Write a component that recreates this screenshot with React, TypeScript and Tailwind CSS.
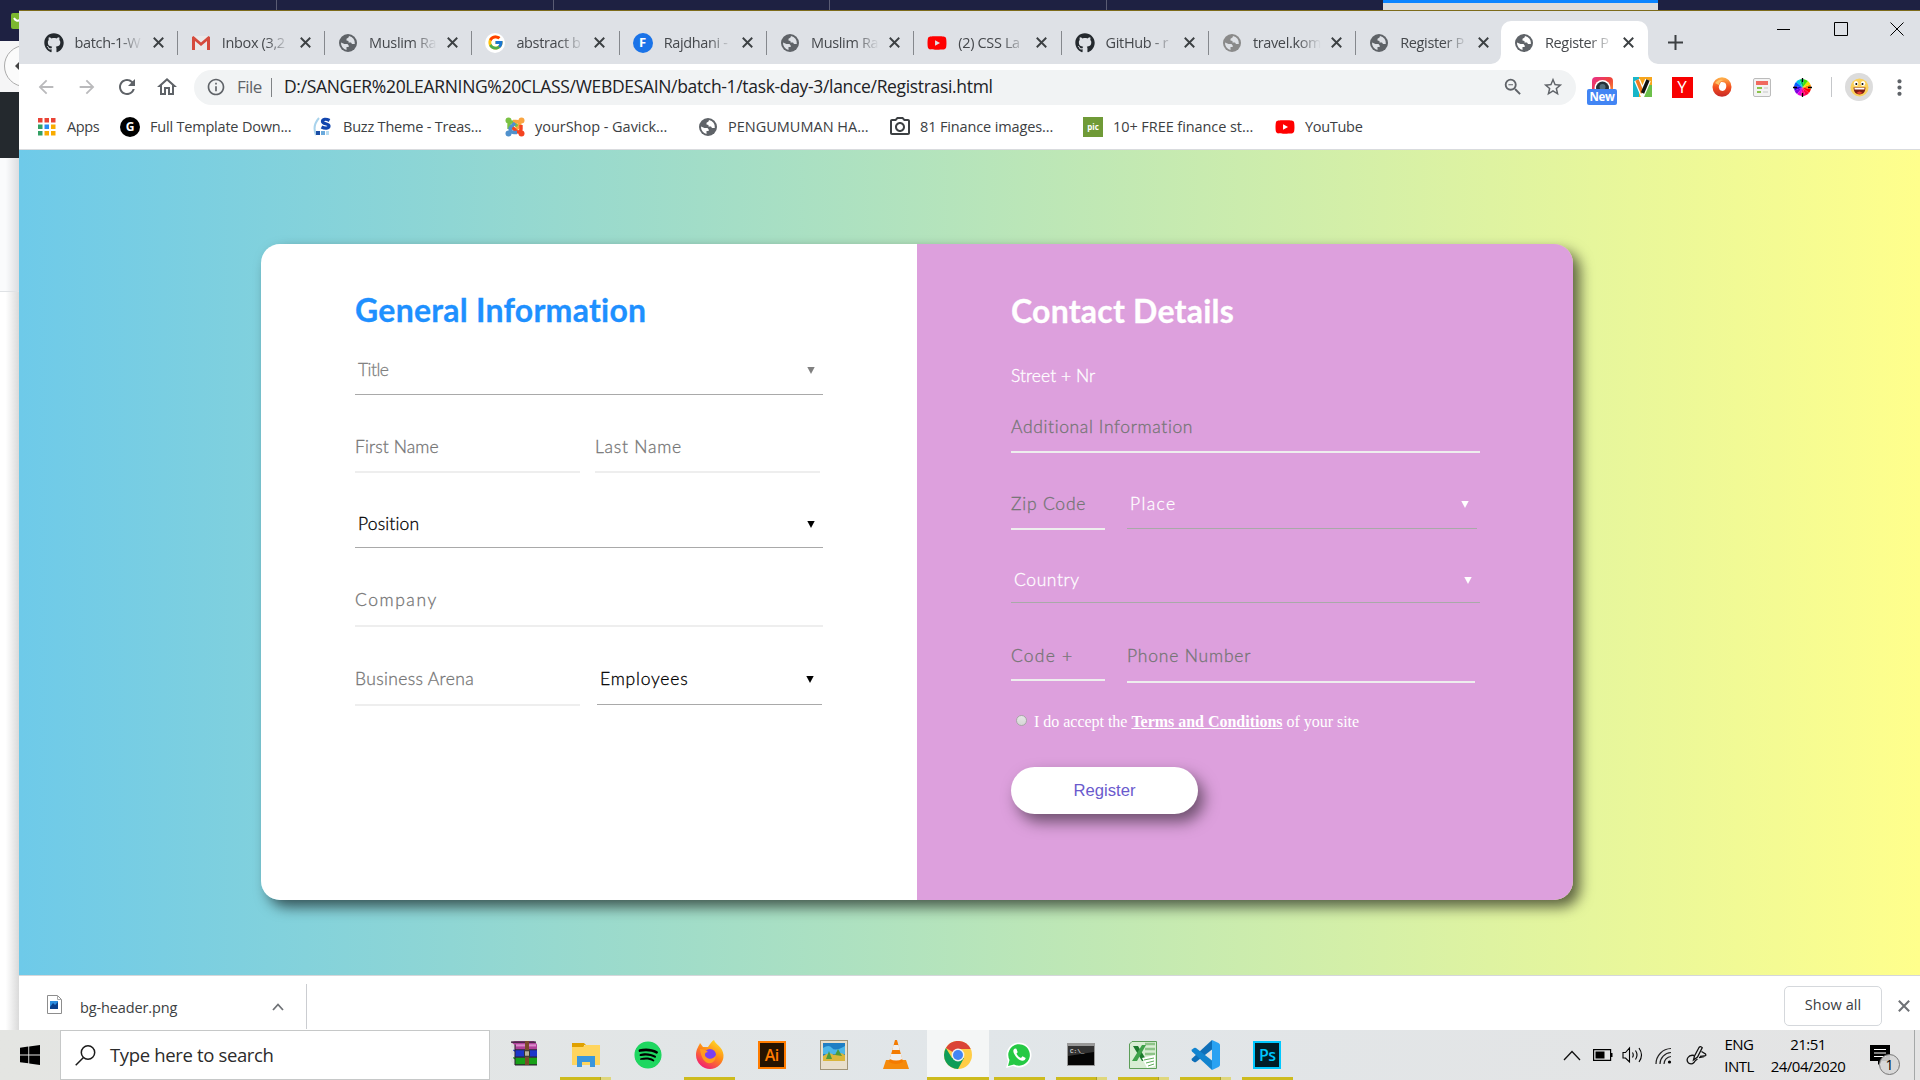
import type { ReactNode } from "react";
import { FaGithub, FaYoutube, FaSpotify } from "react-icons/fa";
import { FcGoogle } from "react-icons/fc";
import {
  MdInfoOutline, MdZoomOut, MdStarBorder, MdOutlineHome, MdRefresh, MdArrowBack,
  MdArrowForward, MdMoreVert, MdOutlinePhotoCamera,
} from "react-icons/md";

/* ---------- small icons ---------- */

const Gmail = () => (
  <svg width="18" height="14" viewBox="0 0 18 14">
    <rect width="18" height="14" rx="1" fill="#e9e9e9" />
    <path d="M0 1v13h3V5l6 5 6-5v9h3V1l-1.500-1L9 6.500 1.500 0z" fill="#d54b3d" />
  </svg>
);
const FontF = () => (
  <span className="flex size-5 items-center justify-center rounded-full bg-[#1a73e8] text-[13px] font-bold text-white">F</span>
);
const Globe = ({ c = "text-[#5f6368]", land = "#dee1e6" }: { c?: string; land?: string }) => (
  <svg className={"size-[18px] " + c} viewBox="0 0 18 18">
    <circle cx="9" cy="9" r="9" fill="currentColor" />
    <path d="M2 8.500l3.500 1.500h3l1.200 1.500v1.500H7.500v3A7.200 7.200 0 0 1 2 8.500M10 2l-.5 1.500-2 1.200v1.800l2 .5v1.500h2.500l1 1.500h2.800A7.200 7.200 0 0 0 10 2" fill={land} />
  </svg>
);
const YT = () => (
  <span className="flex size-5 items-center justify-center"><FaYoutube className="size-5 text-[#f00]" /></span>
);
const Google = () => (
  <span className="flex size-5 items-center justify-center rounded-full bg-white"><FcGoogle className="size-[17px]" /></span>
);
const Cross = ({ className }: { className: string }) => (
  <svg className={className} viewBox="0 0 10 10" stroke="currentColor" strokeWidth="1.700"><path d="M.7.7l8.600 8.600M9.300.7L.7 9.300" /></svg>
);
const AppsIcon = () => {
  const c = ["#ea4335", "#ea4335", "#ea4335", "#34a065", "#2a8bf2", "#f9ab00", "#34a065", "#f9ab00", "#f9ab00"];
  return (
    <svg width="18" height="18" viewBox="0 0 18 18">
      {c.map((f, i) => <rect key={i} x={(i % 3) * 6.500} y={Math.floor(i / 3) * 6.500} width="4.500" height="4.500" fill={f} />)}
    </svg>
  );
};
const Buzz = () => (
  <svg width="20" height="20" viewBox="0 0 20 20">
    <path d="M6 1Q-1 9 3 18" fill="none" stroke="#a9d3ec" strokeWidth="2" />
    <path d="M16.500 3.500C13 1.500 9.500 2 9.500 4.500c0 3 6.500 1.500 6.500 4.500 0 2.500-4 2.800-7.500 1" fill="none" stroke="#1246ae" strokeWidth="3.200" />
    <rect x="3" y="14" width="4" height="4" fill="#1b4fa6" /><rect x="8" y="14" width="4" height="4" fill="#6aa9dc" /><rect x="13" y="14" width="3" height="4" fill="#b7dcf1" />
  </svg>
);
const Joomla = () => (
  <svg width="20" height="20" viewBox="0 0 20 20" fill="none" strokeWidth="3.400">
    <path d="M4 12V8q0-3 3-3 2 0 3 2l4 4" stroke="#7ac143" />
    <path d="M8 4.500h3q4 0 4 4-1 2-3 3l-2 2" stroke="#f9a541" />
    <path d="M16 8v4q0 3-3 3-2 0-3-2L6 9" stroke="#f44321" />
    <path d="M12 15.500H9q-4 0-4-4Q6 9 8 8l2-2" stroke="#5091cd" />
    <g stroke="none"><circle cx="3.500" cy="3.500" r="3" fill="#7ac143" /><circle cx="16.500" cy="3.500" r="3" fill="#f9a541" /><circle cx="3.500" cy="16.500" r="3" fill="#5091cd" /><circle cx="16.500" cy="16.500" r="3" fill="#f44321" /></g>
  </svg>
);

/* ---------- browser chrome ---------- */

const tabs: { icon: ReactNode; label: string; active?: boolean; last?: boolean }[] = [
  { icon: <FaGithub className="size-5 text-[#24292e]" />, label: "batch-1-W" },
  { icon: <Gmail />, label: "Inbox (3,2" },
  { icon: <Globe />, label: "Muslim Ra" },
  { icon: <Google />, label: "abstract b" },
  { icon: <FontF />, label: "Rajdhani - " },
  { icon: <Globe />, label: "Muslim Ra" },
  { icon: <YT />, label: "(2) CSS La" },
  { icon: <FaGithub className="size-5 text-[#24292e]" />, label: "GitHub - r" },
  { icon: <Globe c="text-[#8a8a8a]" />, label: "travel.kom" },
  { icon: <Globe />, label: "Register P", last: true },
  { icon: <Globe land="#fff" />, label: "Register P", active: true },
];

const TabStrip = () => (
  <div className="flex h-[53px] items-end bg-[#dee1e6] pl-[11.500px]">
    {tabs.map((t, i) => (
      <div
        key={i}
        className={
          "relative flex h-[43px] w-[147.300px] shrink-0 items-center pl-[12px] " + (t.active ? "-ml-[2.500px] rounded-t-[10px] bg-white" : "")
        }
      >
        <span className="flex w-[22px] justify-center">{t.icon}</span>
        <span className="ml-[10px] w-[68px] overflow-hidden whitespace-nowrap text-[14.500px] tracking-[-0.350px] text-[#45484c] [mask-image:linear-gradient(to_right,black_65%,transparent)]">
          {t.label}
        </span>
        <Cross className="ml-[10px] size-[11px] text-[#3c4043]" />
        {!t.active && !t.last && <span className="absolute top-[10px] right-0 h-6 w-px bg-[#85888d]" />}
        {t.active && (
          <>
            <svg className="absolute bottom-0 -left-[10px] size-[10px]" viewBox="0 0 10 10"><path d="M10 0v10H0A10 10 0 0 0 10 0" fill="#fff" /></svg>
            <svg className="absolute -right-[10px] bottom-0 size-[10px]" viewBox="0 0 10 10"><path d="M0 0v10h10A10 10 0 0 1 0 0" fill="#fff" /></svg>
          </>
        )}
      </div>
    ))}
    <svg className="mb-[14px] ml-[20px] size-[15px]" viewBox="0 0 15 15" stroke="#3c4043" strokeWidth="2"><path d="M7.500 0v15M0 7.500h15" /></svg>
    <div className="mb-[28px] ml-auto flex items-center pr-[16px]">
      <svg className="size-[14px]" viewBox="0 0 14 14" stroke="#000"><path d="M0 7.500h13" /></svg>
      <svg className="ml-[43px] size-[14px]" viewBox="0 0 14 14" fill="none" stroke="#000"><path d="M.5.5h13v13H.5z" /></svg>
      <svg className="ml-[42px] size-[14px]" viewBox="0 0 14 14" stroke="#000"><path d="M.5.5l13 13M13.500.5l-13 13" /></svg>
    </div>
  </div>
);

const extensions: ReactNode[] = [
  <span className="relative flex w-[30px] justify-center">
    <svg width="21" height="21" viewBox="0 0 21 21">
      <defs><linearGradient id="ig" x2="1" y2="1"><stop stopColor="#e8308c" /><stop offset=".5" stopColor="#f0443a" /><stop offset="1" stopColor="#fbb034" /></linearGradient></defs>
      <rect width="21" height="21" rx="4" fill="url(#ig)" /><circle cx="10.500" cy="11" r="8" fill="#fff" /><circle cx="10.500" cy="11" r="6.500" fill="#263238" /><circle cx="10.500" cy="10" r="3" fill="#546e7a" />
    </svg>
    <span className="absolute top-[12px] left-0 flex h-[16px] w-[30px] items-center justify-center rounded-[2px] bg-[#4285f4] text-[11.500px] font-bold tracking-[-0.300px] text-white">New</span>
  </span>,
  <svg width="19" height="20" viewBox="0 0 19 20">
    <rect width="19" height="20" fill="#f7a51c" /><path d="M0 0h6v20H0z" fill="#18b6c9" /><path d="M13 8h6v12H9z" fill="#6cc04a" />
    <path d="M4 3l5.500 13L15 3" fill="none" stroke="#fff" strokeWidth="6" /><path d="M4 3l5.500 13" stroke="#f57c20" strokeWidth="3.500" /><path d="M9.500 16L15 3" stroke="#111" strokeWidth="3.500" />
  </svg>,
  <span className="flex size-[21px] items-center justify-center bg-[#f80000] text-[17px] text-white">Y</span>,
  <svg width="20" height="20" viewBox="0 0 20 20">
    <defs><linearGradient id="fl" x2="0" y2="1"><stop stopColor="#ffb74d" /><stop offset=".5" stopColor="#f4511e" /><stop offset="1" stopColor="#c62828" /></linearGradient></defs>
    <ellipse cx="10" cy="10" rx="9.500" ry="9.800" fill="url(#fl)" /><path d="M9 5c4.500-.5 6 2.500 5 6-1 3-4.500 4-6.500 1.500C6 10 7 8 9 5" fill="#fff" />
    <path d="M3 6Q7 1 12 3 7 4 7 8" fill="#ffc267" />
  </svg>,
  <svg width="18" height="19" viewBox="0 0 18 19"><rect x=".5" y=".5" width="17" height="18" rx="1.500" fill="#f3f3f3" stroke="#bbb" /><path d="M3 3h12v4H3z" fill="#f06a5f" /><path d="M4 9h5v2H4zM4 13h4v2H4z" fill="#8bc34a" /><path d="M11 9h4v2h-4zM10 13h5v2h-5z" fill="#ddd" /></svg>,
  <svg width="19" height="19" viewBox="-9.500 -9.500 19 19">
    {["#f00", "#ff8000", "#e8e800", "#40e000", "#00c060", "#00c8e8", "#0060ff", "#3000e0", "#8000e0", "#e000e0", "#ff0080", "#ff0040"].map((f, i) => (
      <path key={f} d="M0 0V-8.500A8.500 8.500 0 0 1 4.250-7.360z" fill={f} transform={`rotate(${100 - i * 30})`} />
    ))}
    <path d="M0-9.500v4M0 5.500v4M-9.500 0h4M5.500 0h4" stroke="#000" strokeWidth="1.300" />
  </svg>,
];

const Toolbar = () => (
  <div className="flex h-[46px] items-center bg-white text-[#5f6368]">
    <MdArrowBack className="ml-[16px] size-[22px] text-[#bababc]" />
    <MdArrowForward className="ml-[19px] size-[22px] text-[#bababc]" />
    <MdRefresh className="ml-[17px] size-[24px]" />
    <MdOutlineHome className="ml-[16px] size-[24px]" />
    <div className="ml-[15px] flex h-[35px] w-[1382px] items-center rounded-full bg-[#f1f3f4] pl-[12px]">
      <MdInfoOutline className="size-[20px]" />
      <span className="ml-[11px] w-[34px] text-[17px] tracking-[-0.500px]">File</span>
      <span className="h-[19px] w-px bg-[#808386]" />
      <span className="mb-px ml-[12px] text-[17.500px] tracking-[-0.330px] whitespace-nowrap text-[#202124]">
        D:/SANGER%20LEARNING%20CLASS/WEBDESAIN/batch-1/task-day-3/lance/Registrasi.html
      </span>
      <MdZoomOut className="mr-[18px] ml-auto size-[22px]" />
      <MdStarBorder className="mr-[12px] size-[22px]" />
    </div>
    <div className="ml-[6px] flex">
      {extensions.map((e, i) => <div key={i} className="flex w-10 items-center justify-center">{e}</div>)}
    </div>
    <span className="ml-[9px] h-[20px] w-px bg-[#c5c7ca]" />
    <span className="ml-[13px] flex size-[28px] items-center justify-center rounded-full bg-[#dcdcdc]">
      <svg width="19" height="19" viewBox="0 0 19 19"><circle cx="9.500" cy="9.500" r="9" fill="#fbd15b" /><ellipse cx="6" cy="5.500" rx="2.200" ry="2.500" fill="#fff" /><ellipse cx="13" cy="5.500" rx="2.200" ry="2.500" fill="#fff" /><circle cx="6.300" cy="6" r="1" /><circle cx="12.500" cy="6" r="1" /><path d="M3.500 9.500h12q-.5 7-6 7t-6-7" fill="#7d1d12" /><path d="M4.500 9.800h10v1.700h-10z" fill="#fff" /><path d="M6.500 15q3-3 6 0-3 2-6 0" fill="#e8452c" /></svg>
    </span>
    <MdMoreVert className="ml-[14px] size-[25px]" />
  </div>
);

const bookmarks: { icon: ReactNode; label: string; w: string; t: string }[] = [
  { icon: <AppsIcon />, label: "Apps", w: "w-[83px]", t: "tracking-[-0.350px]" },
  { icon: <span className="flex size-5 items-center justify-center rounded-full bg-black text-[12px] font-bold text-white">G</span>, label: "Full Template Down...", w: "w-[193px]", t: "tracking-[-0.200px]" },
  { icon: <Buzz />, label: "Buzz Theme - Treas...", w: "w-[192px]", t: "tracking-[-0.200px]" },
  { icon: <Joomla />, label: "yourShop - Gavick...", w: "w-[193px]", t: "tracking-[-0.030px]" },
  { icon: <Globe land="#fff" />, label: "PENGUMUMAN HA...", w: "w-[192px]", t: "tracking-[0px]" },
  { icon: <MdOutlinePhotoCamera className="size-[24px] text-[#3c4043]" />, label: "81 Finance images...", w: "w-[193px]", t: "tracking-[-0.130px]" },
  { icon: <span className="flex size-5 items-center justify-center bg-[#6f9a37] text-[8px] font-bold text-white">pic</span>, label: "10+ FREE finance st...", w: "w-[192px]", t: "tracking-[-0.070px]" },
  { icon: <YT />, label: "YouTube", w: "w-[100px]", t: "tracking-[-0.300px]" },
];

const Bookmarks = () => (
  <div className="flex h-[40px] items-center border-b border-[#d9dbde] bg-white pb-[5px] pl-[16px]">
    {bookmarks.map((b) => (
      <div key={b.label} className={"flex shrink-0 items-center " + b.w}>
        <span className="flex w-6 justify-center">{b.icon}</span>
        <span className={"ml-[8px] text-[14.500px] whitespace-nowrap text-[#3c4043] " + b.t}>{b.label}</span>
      </div>
    ))}
  </div>
);

/* ---------- form ---------- */

const Arrow = () => (
  <svg className="mb-[6px] ml-auto h-[7px] w-[8px] shrink-0" viewBox="0 0 8 7"><path d="M.3 0h7.400L4 7z" fill="currentColor" /></svg>
);

type FieldProps = { label: string; className: string; select?: boolean };
const Field = ({ label, className, select }: FieldProps) => (
  <div
    className={
      "flex items-end whitespace-nowrap " +
      (select ? "border-b border-[#a9a9a9] pr-[8px] pl-[3px] " : "border-b-2 border-[#eee] text-[#757575] ") + className
    }
  >
    <span className="leading-5">{label}</span>
    {select && <Arrow />}
  </div>
);

const FormCard = () => (
  <div className="flex h-[656px] w-[1312px] overflow-hidden rounded-[19px] text-[17.500px] font-light [-webkit-text-stroke:0.3px_currentColor] [font-family:Lato,sans-serif]">
    <div className="w-[656px] bg-white pl-[94px]">
      <h1 className="flex h-[96px] items-end pb-[12px] text-[32px] leading-[36px] font-bold tracking-[0.250px] text-[#1e90ff]">General Information</h1>
      <div className="flex h-[55px] items-end"><Field select label="Title" className="w-[468px] pb-[14px] tracking-[-0.500px] text-[#808080]" /></div>
      <div className="flex h-[78px] items-end gap-[15px]">
        <Field label="First Name" className="w-[225px] pb-[14px] tracking-[0.120px]" />
        <Field label="Last Name" className="w-[225px] pb-[14px] tracking-[0.750px]" />
      </div>
      <div className="flex h-[75px] items-end"><Field select label="Position" className="w-[468px] pb-[13px] tracking-[0.150px] text-black" /></div>
      <div className="flex h-[79px] items-end"><Field label="Company" className="w-[468px] pb-[15px] tracking-[1.550px]" /></div>
      <div className="flex h-[79px] items-end gap-[17px]">
        <Field label="Business Arena" className="w-[225px] pb-[15px] tracking-[0.360px]" />
        <Field select label="Employees" className="mb-px w-[225px] pb-[15px] tracking-[0.800px] text-black" />
      </div>
    </div>
    <div className="w-[656px] bg-[#dda0dd] pl-[94px] text-white">
      <h1 className="flex h-[96px] items-end pb-[11px] text-[32px] leading-[36px] font-bold tracking-[0.220px]">Contact Details</h1>
      <p className="flex h-[60px] items-end pb-[14px] leading-5 tracking-[0.050px]">Street + Nr</p>
      <div className="flex h-[53px] items-end"><Field label="Additional Information" className="w-[469px] pb-[14px] tracking-[0.640px]" /></div>
      <div className="flex h-[77px] items-end gap-[22px]">
        <Field label="Zip Code" className="w-[94px] pb-[14px] tracking-[0.800px]" />
        <Field select label="Place" className="mb-px w-[350px] pb-[14px] tracking-[1.400px]" />
      </div>
      <div className="flex h-[73px] items-end"><Field select label="Country" className="w-[469px] pb-[12px] tracking-[0.600px]" /></div>
      <div className="flex h-[80px] items-end gap-[22px]">
        <Field label="Code +" className="mb-[2px] w-[94px] pb-[13px] tracking-[1.200px]" />
        <Field label="Phone Number" className="w-[348px] pb-[15px] tracking-[0.800px]" />
      </div>
      <div className="mt-[28px] flex h-5 items-center pl-[5px] text-[16px] font-normal tracking-[-0.020px] [-webkit-text-stroke:0px] [font-family:'Liberation_Serif',serif]">
        <span className="mb-[2px] size-[11px] rounded-full border border-[#a8a8a8] bg-linear-to-b from-[#e6e6e6] to-[#d6d6d6]" />
        <span className="mt-px ml-[7px] whitespace-nowrap">I do accept the <b className="underline">Terms and Conditions</b> of your site</span>
      </div>
      <div className="mt-[36px] flex h-[47px] w-[187px] items-center justify-center rounded-[24px] bg-white text-[16.670px] font-normal text-[#6a5acd] shadow-[6px_8px_15px_rgba(0,0,0,0.5)] [-webkit-text-stroke:0px] [font-family:'Liberation_Sans',sans-serif]">
        Register
      </div>
    </div>
  </div>
);

const DownloadBar = () => (
  <div className="flex h-[55px] items-center border-t border-[#d5d7da] bg-white pt-[5px] text-[14.500px] tracking-[-0.120px] text-[#3c4043]">
    <svg className="mb-[2px] ml-[28px]" width="15" height="19" viewBox="0 0 15 19"><path d="M.5.5h10l4 4v14H.5z" fill="#fff" stroke="#8d8d8d" /><path d="M10.500.5v4h4" fill="none" stroke="#aaa" /><path d="M3 6h8v8H3z" fill="#2b8de0" /><path d="M3 12l3-4 2 2 3-3v7H3z" fill="#0a3f8c" /></svg>
    <span className="mt-[4px] ml-[18px] w-[192px]">bg-header.png</span>
    <svg className="mt-[2px]" width="12" height="8" viewBox="0 0 12 8" fill="none" stroke="#6e7175" strokeWidth="1.800"><path d="M1 7l5-5.500L11 7" /></svg>
    <span className="mt-[2px] ml-[22px] h-[45px] w-px bg-[#cbcdd1]" />
    <span className="ml-auto flex h-[40px] w-[98px] items-center justify-center rounded-[5px] border border-[#d5d8dc] pb-[2px] tracking-[0.050px]">Show all</span>
    <Cross className="mr-[10px] ml-[16px] size-[12px] text-[#6e7175]" />
  </div>
);

/* ---------- taskbar ---------- */

const WinRar = () => (
  <svg className="mb-[3px]" width="28" height="25" viewBox="0 0 28 23" preserveAspectRatio="none">
    <path d="M1 1l4-1h19l3 3v5H5z" fill="#b0409a" /><path d="M6 4h20" stroke="#d98bcb" strokeWidth="2" /><path d="M3 8h24v7H5z" fill="#1c36c9" /><path d="M3 15h24v7H5z" fill="#18a018" />
    <path d="M1 1l4 3v4L1 5zM1 8l4 2v4l-4-2zM1 15l4 2v5l-4-3z" fill="#ddd" /><path d="M5 3.500V22M1 1h25M5 8h22M5 14.800h22M5 22h22" stroke="#2b2230" /><path d="M15 0h4v22h-4z" fill="#7a4a2a" /><path d="M14.500 9h5v5h-5z" fill="#b9b09a" stroke="#333" />
  </svg>
);
const Explorer = () => (
  <svg width="28" height="24" viewBox="0 0 28 24"><path d="M0 0h12l2 2h-2v4H0z" fill="#e0a100" /><path d="M0 4h11l2-2h15v20H0z" fill="#ffd55f" /><path d="M5 24V13h18v11h-5v-5h-8v5z" fill="#3a96dd" /></svg>
);
const Firefox = () => (
  <svg width="28" height="29" viewBox="0 0 28 29">
    <defs><linearGradient id="ff" x1=".8" x2=".2" y2="1"><stop stopColor="#ffe226" /><stop offset=".45" stopColor="#ff8a16" /><stop offset="1" stopColor="#f0127c" /></linearGradient></defs>
    <path d="M18 0c1 4 9 7 9.500 15C28 23 21 29 14 29S0 23 0 15C0 9 3 6 4 3l3 4h5c2-3 4-6 6-7" fill="url(#ff)" />
    <circle cx="14" cy="15" r="6" fill="#7a3ff2" /><path d="M4 9c4 0 6 1 8 3-3 0-4 3-2 5 3 3 8 2 10-2 0 6-4 9-8 8S5 17 4 9" fill="#ff9a1f" />
  </svg>
);
const Adobe = ({ t, cls }: { t: string; cls: string }) => (
  <span className={"flex size-[28px] items-center justify-center border-2 text-[16px] font-semibold tracking-[-0.500px] " + cls}>{t}</span>
);
const Photo = () => (
  <svg width="28" height="30" viewBox="0 0 28 30"><rect x=".5" y=".5" width="27" height="29" fill="#e8dfcc" stroke="#a09478" /><path d="M3 3h22v18H3z" fill="#1f7fc4" /><path d="M3 8q6-4 9 0t13-2v8H3z" fill="#4db6e8" /><path d="M3 16q6-5 11-1 6-4 11 0v6H3z" fill="#d9b63c" /><path d="M6 19l3-8 3 8zM15 15l3-6 4 7z" fill="#4c9a3a" /></svg>
);
const Vlc = () => (
  <svg width="26" height="29" viewBox="0 0 26 29"><path d="M3 20h20l3 9H0z" fill="#f58a0b" /><path d="M12 0h2l6 22q-7 4-14 0z" fill="#f47b00" /><path d="M10.500 5h5l1.300 5H9.200zM8 14h10l1.300 5q-6 3-12.600 0z" fill="#eee" /></svg>
);
const Chrome = () => (
  <svg width="28" height="28" viewBox="-14 -14 28 28">
    <circle r="14" fill="#ffcd46" />
    <path d="M-12.120-7A14 14 0 0 1 12.700-6H0v6z" fill="#db4437" />
    <path d="M-12.120-7A14 14 0 0 0 0 14L6 3-6 3z" fill="#0f9d58" />
    <circle r="6.400" fill="#f1f1f1" /><circle r="5" fill="#4285f4" />
  </svg>
);
const WhatsApp = () => (
  <svg width="26" height="26" viewBox="0 0 26 26"><path d="M0 26l2-7A12.500 12.500 0 1 1 7 24z" fill="#fff" /><path d="M2 24l1.500-6A10.800 10.800 0 1 1 8 22.500z" fill="#25c944" /><path d="M9 6.500c-2 1-2 3-1 5 2 4 5 6.500 8 7.200 2 .3 3.500-1 3.700-2.700l-3.200-1.700-1.500 1.700c-2-.7-4-2.700-4.500-4.500l1.200-1.300-1.300-3.500z" fill="#fff" /></svg>
);
const Cmd = () => (
  <svg width="28" height="23" viewBox="0 0 28 23"><rect width="28" height="23" fill="#999" /><path d="M1 3h26v19H1z" fill="#050505" /><path d="M1 3h26v6L1 13z" fill="#333" /><text x="3" y="10" fontSize="6" fill="#fff" fontFamily="Liberation Mono, monospace">C:\_</text></svg>
);
const Excel = () => (
  <svg width="28" height="28" viewBox="0 0 28 28"><path d="M3 .5h24.500v27H.5V3z" fill="#d8edd3" stroke="#5c9e58" /><path d="M16 3h10M16 8h10M16 13h10" stroke="#8cc487" strokeWidth="2.500" /><path d="M4 5h5l9 15h-5z" fill="#1d7a2d" /><path d="M17 4h-4L3 20h5z" fill="#3fa24a" /><path d="M13 17l13-3v11l-8 2z" fill="#fff" /><path d="M15 19l10-2M17 22l8-2M19 25l6-2" stroke="#5fae5b" /></svg>
);
const VsCode = () => (
  <svg width="30" height="30" viewBox="0 0 30 30">
    <path d="M22 0L2 18.500q-1 1 0 2l2 1.500q1 .6 2 0L22 9.500z" fill="#0f6fb8" />
    <path d="M22 30L2 11.500q-1-1 0-2L4 8q1-.6 2 0l16 12.500z" fill="#1284cf" />
    <path d="M22 0l6.500 3q1.500.8 1.500 2v20q0 1.200-1.500 2L22 30z" fill="#2aa2f2" />
  </svg>
);

const apps: { icon: ReactNode; line?: "one" | "multi" | "full" }[] = [
  { icon: <WinRar /> },
  { icon: <Explorer />, line: "multi" },
  { icon: <span className="flex size-[26px] items-center justify-center rounded-full bg-black"><FaSpotify className="size-[28px] shrink-0 text-[#1ed760]" /></span> },
  { icon: <Firefox />, line: "one" },
  { icon: <Adobe t="Ai" cls="border-[#ff7c00] bg-[#261300] text-[#ff7c00]" /> },
  { icon: <Photo /> },
  { icon: <Vlc /> },
  { icon: <Chrome />, line: "full" },
  { icon: <WhatsApp />, line: "one" },
  { icon: <Cmd />, line: "multi" },
  { icon: <Excel />, line: "multi" },
  { icon: <VsCode />, line: "multi" },
  { icon: <Adobe t="Ps" cls="border-[#00c8ff] bg-[#001d26] text-[#00c8ff]" />, line: "one" },
];

const Taskbar = () => (
  <div className="flex h-[50px] bg-linear-to-r from-[#e4e5e2] via-[#e1e6e9] to-[#e4e4e4] text-black">
    <div className="flex w-[60px] items-center pl-[20px]">
      <svg width="20" height="20" viewBox="0 0 20 20"><path d="M0 2.800l8.300-1.200v7.900H0zM9.200 1.500L20 0v9.500H9.200zM0 10.400h8.300v7.900L0 17.200zM9.200 10.400H20V20L9.200 18.500z" /></svg>
    </div>
    <div className="flex w-[430px] items-center border border-[#c6c8c8] bg-white pl-[14px]">
      <svg width="21" height="21" viewBox="0 0 21 21" fill="none" stroke="#1b1b1b" strokeWidth="1.500"><circle cx="13" cy="7.500" r="6.700" /><path d="M8.500 12.500L.7 20.300" /></svg>
      <span className="ml-[14px] text-[18.500px] tracking-[-0.350px] text-[#2b2b2b]">Type here to search</span>
    </div>
    <div className="ml-[3px] flex">
      {apps.map((a, i) => (
        <div key={i} className={"flex w-[61.950px] flex-col items-center " + (a.line === "full" ? "bg-[#f4f6f6]" : "")}>
          <div className="flex h-[47px] items-center pt-[2px]">{a.icon}</div>
          {a.line === "one" && <div className="h-[3px] w-[51px] bg-[#cdbb1e]" />}
          {a.line === "full" && <div className="h-[3px] w-full bg-[#cdbb1e]" />}
          {a.line === "multi" && <div className="flex h-[3px] w-[51px] bg-[#dfd77c]"><div className="w-[41px] border-r border-[#a99c2c] bg-[#cdbb1e]" /></div>}
        </div>
      ))}
    </div>
    <div className="ml-auto flex items-center text-[15px] leading-[22px] tracking-[-0.500px]">
      <svg width="18" height="11" viewBox="0 0 18 11" fill="none" stroke="#111" strokeWidth="1.300"><path d="M1 10l8-8.500L17 10" /></svg>
      <svg className="ml-[12px]" width="20" height="12" viewBox="0 0 20 12"><path d="M.6.6h17v10.800H.6z" fill="none" stroke="#000" strokeWidth="1.200" /><path d="M2.500 2.500h9v7h-9zM18 4h1.500v4H18z" /></svg>
      <svg className="ml-[9px]" width="22" height="18" viewBox="0 0 22 18" fill="none" stroke="#000" strokeWidth="1.100"><path d="M1 6.500h2.500L7.500 2v14L3.500 12H1zM10.500 6.500q1.500 2.500 0 5M13.500 4.500q3 4.500 0 9M17 2q5 7 0 14" /></svg>
      <svg className="ml-[11px]" width="17" height="17" viewBox="0 0 17 17" fill="none" stroke="#222" strokeWidth="1.200"><path d="M1 17A15.500 15.500 0 0 1 16 1.500M5 17A11.500 11.500 0 0 1 16 5.500M9 17a7.500 7.500 0 0 1 7-7.500" /><circle cx="14.500" cy="15" r="1.600" fill="#000" stroke="none" /></svg>
      <svg className="ml-[14px]" width="21" height="21" viewBox="0 0 21 21" fill="none" stroke="#111" strokeWidth="1.300"><path d="M7.500 15l1-4L13 2.500q1.500-2 3.200.2L11.500 12zM15.500 6.500l4 2.500q1 2-1.200 2l-4.300.3M13 12.500l5-1M8 10.500q-4-1-6 2T2.500 18q3 2 5.500-.500 1-2 3.500-3.500" /></svg>
      <div className="ml-[16px] w-[32px] text-center whitespace-nowrap"><div>ENG</div><div>INTL</div></div>
      <div className="ml-[13px] w-[80px] text-center"><div>21:51</div><div>24/04/2020</div></div>
      <div className="relative ml-[22px] size-[20px]">
        <svg width="20" height="20" viewBox="0 0 20 20"><path d="M0 0h20v16h-8l-4 4v-4H0z" /><path d="M4 4.500h12M4 8h12M4 11.500h12" stroke="#fff" /></svg>
        <span className="absolute top-[9px] left-[9px] flex size-[21px] items-center justify-center rounded-full border border-[#777] bg-[#d6d6d6]/90 text-[14px] tracking-normal">1</span>
      </div>
      <span className="ml-[24px] h-full w-px bg-[#a5a8a8]" />
      <span className="w-[5px]" />
    </div>
  </div>
);

/* ---------- desktop ---------- */

const BackTop = () => (
  <div className="flex h-[10px] bg-[#1e2142]">
    <div className="w-[276px]" />
    {[0, 1, 2].map((i) => <div key={i} className="w-[276.500px] border-l border-[#5a5c74]" />)}
    <div className="w-[277px] border-l border-[#5a5c74]" />
    <div className="w-[275px] border-t-[3px] border-[#0a84ff] bg-[#dcdcdc]" />
  </div>
);

const BackLeft = () => (
  <div className="flex w-[19px] shrink-0 flex-col overflow-hidden">
    <div className="h-[31px] bg-[#1e2142] pt-[3px] pl-[11px]">
      <div className="flex h-[16px] w-[20px] items-start rounded-[2px] bg-[#7cb82f] pl-[2px]">
        <svg width="14" height="12" viewBox="0 0 14 12" fill="none" stroke="#fff" strokeWidth="2"><path d="M1 5q2 4 6 2" /></svg>
      </div>
    </div>
    <div className="h-[51px] bg-[#f5f5f6] pt-[4px] pl-[4px]">
      <div className="flex size-[42px] items-center rounded-full border border-[#ababab] bg-[#fbfbfb] pl-[10px]">
        <svg width="8" height="10" viewBox="0 0 8 10"><path d="M0 5l5-5h3v10H5z" fill="#444" /></svg>
      </div>
    </div>
    <div className="h-[66px] bg-[#24292e]" />
    <div className="h-[134px] border-b border-[#dfe2e5] bg-linear-to-r from-[#fafbfc] from-30% to-[#dcdde0]" />
    <div className="flex-1 bg-linear-to-r from-white from-30% to-[#dadada]" />
  </div>
);

export default function App() {
  return (
    <div className="flex h-[1080px] w-[1920px] flex-col overflow-hidden bg-white [font-family:'Open_Sans','Noto_Sans',sans-serif]">
      <BackTop />
      <div className="flex h-[1020px]">
        <BackLeft />
        <div className="flex min-w-0 flex-1 flex-col border-t border-[#7d6b1a]">
          <TabStrip />
          <Toolbar />
          <Bookmarks />
          <div className="flex-1 bg-[linear-gradient(to_right,#6ecae9,#ffff8c)] pt-[94px] pl-[242px]">
            <div className="w-[1312px] rounded-[19px] shadow-[7px_7px_14px_rgba(0,0,0,0.6)]"><FormCard /></div>
          </div>
          <DownloadBar />
        </div>
      </div>
      <Taskbar />
    </div>
  );
}
